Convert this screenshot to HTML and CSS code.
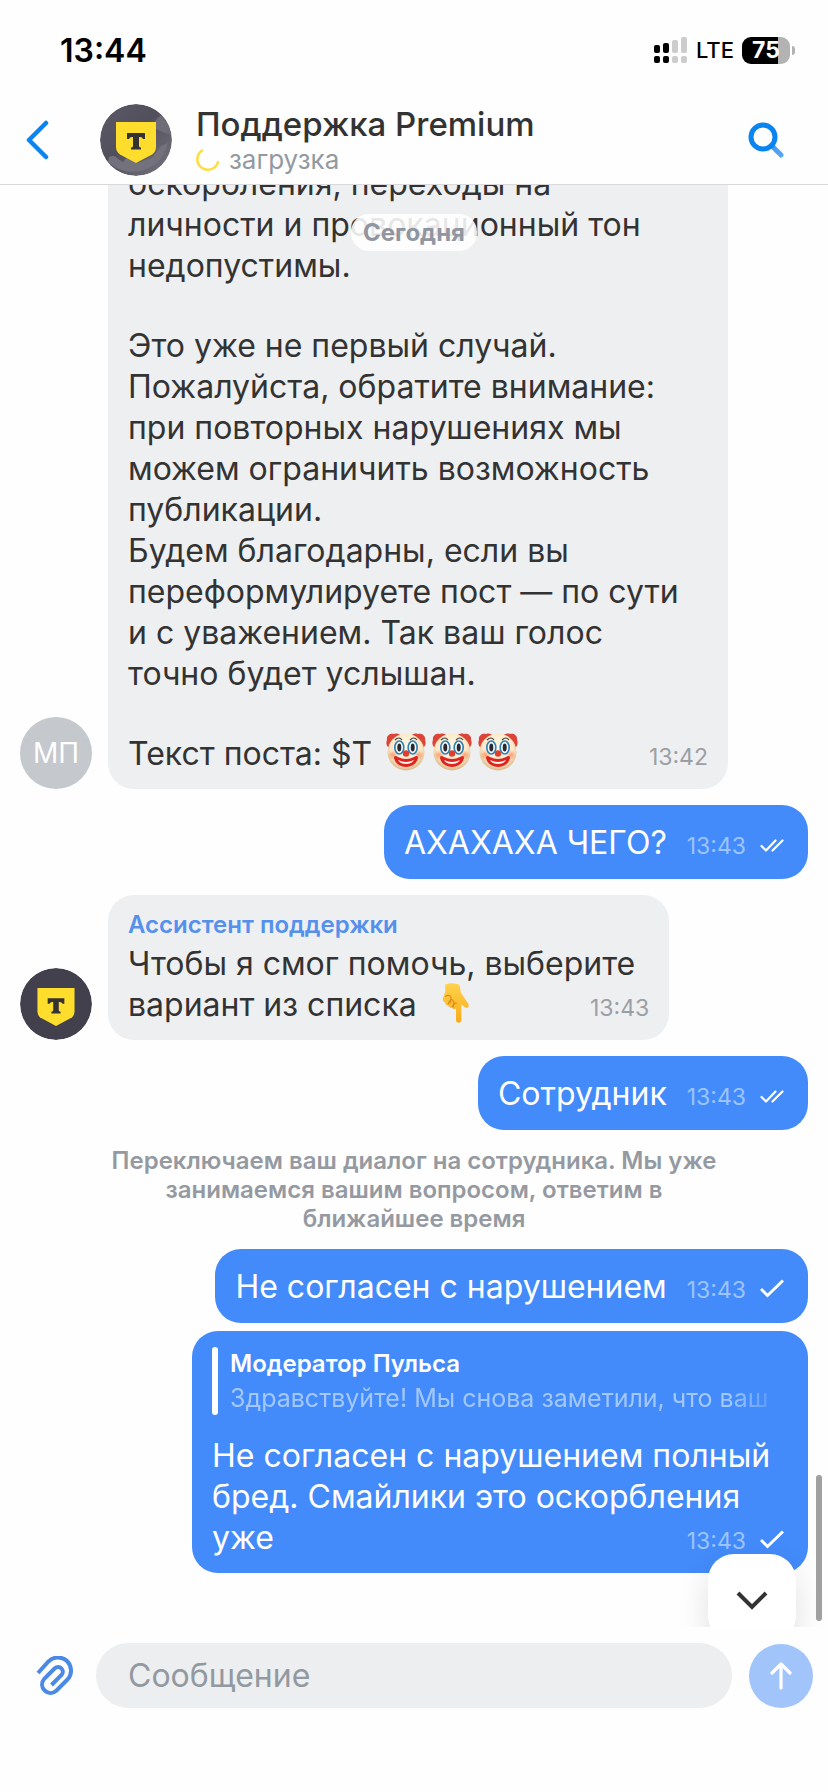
FILE: index.html
```html
<!DOCTYPE html>
<html lang="ru">
<head>
<meta charset="utf-8">
<meta name="viewport" content="width=device-width, initial-scale=1">
<title>Поддержка Premium</title>
<link rel="stylesheet" href="styles.css">
</head>
<body>
<svg class="defs" width="0" height="0" aria-hidden="true">
  <defs>
    <radialGradient id="face" cx="50%" cy="38%" r="62%">
      <stop offset="0" stop-color="#fffbe9"/><stop offset=".65" stop-color="#fbe9c8"/><stop offset="1" stop-color="#dcb98a"/>
    </radialGradient>
    <radialGradient id="cheek"><stop offset="0" stop-color="#ff8a5c" stop-opacity=".8"/><stop offset="1" stop-color="#ff8a5c" stop-opacity="0"/></radialGradient>
    <linearGradient id="hand" x1="0" y1="0" x2="0" y2="1"><stop offset="0" stop-color="#ffd24a"/><stop offset="1" stop-color="#f9ab1c"/></linearGradient>
    <linearGradient id="night" x1="0" y1="0" x2="1" y2="1"><stop offset="0" stop-color="#5c5a66"/><stop offset=".45" stop-color="#514f5b"/><stop offset="1" stop-color="#77757f"/></linearGradient>
    <linearGradient id="lens" gradientUnits="userSpaceOnUse" x1="23" y1="23" x2="34" y2="35"><stop offset="0" stop-color="#0a84ee"/><stop offset=".3" stop-color="#4a9ef2"/><stop offset="1" stop-color="#5aa6f3"/></linearGradient>
    <symbol id="clown" viewBox="0 0 40 38">
      <path d="M7 17C2 16-1 11 1 7 0 3 4 0 8 1c3-1 6 0 7 2zM33 17c5-1 8-6 6-10 1-4-3-7-7-6-3-1-6 0-7 2z" fill="#dc4438"/>
      <circle cx="20" cy="19" r="18.5" fill="url(#face)"/>
      <circle cx="7" cy="22" r="5" fill="url(#cheek)"/><circle cx="33" cy="22" r="5" fill="url(#cheek)"/>
      <path d="M9 7q4-4 7 0M24 7q4-4 7 0" fill="none" stroke="#4b4540" stroke-width="1.2"/>
      <ellipse cx="13.3" cy="14.5" rx="4.5" ry="6.5" fill="#fff" stroke="#3181b5" stroke-width="1.7"/>
      <ellipse cx="26.7" cy="14.5" rx="4.5" ry="6.5" fill="#fff" stroke="#3181b5" stroke-width="1.7"/>
      <ellipse cx="13.3" cy="14.5" rx="2" ry="4" fill="#282a30"/><ellipse cx="26.7" cy="14.5" rx="2" ry="4" fill="#282a30"/>
      <circle cx="20" cy="20.5" r="3.2" fill="#df3f2c"/>
      <path d="M8 24q1-2 4 0 8 4 16 0 3-2 4 0c0 5-5 10-12 10S8 29 8 24z" fill="#dd2420"/>
      <path d="M12 27q8 4 16 0-2 4-8 4t-8-4z" fill="#fff5ea"/>
    </symbol>
    <symbol id="down-hand" viewBox="0 0 28 42">
      <path d="M3 1.500Q9-.5 15 1q3 .3 3 3l1 6 7.500 11c1.500 3-.5 5.500-3 4L19.500 22v16a2.700 2.700 0 0 1-5.500 0V26q-3 2-4-1-3 1-4-2-3 0-3-3-3-1-2.500-4L3 9z" fill="url(#hand)"/>
      <path d="M3 14q4-3 6 1l-1 6M6 22q2-7 5-4 2 2-1 7M11 25q1-6 4-4" fill="none" stroke="#dc8d17" stroke-width="1.2"/>
    </symbol>
    <symbol id="shield" viewBox="0 0 40 41">
      <path d="M0 0h40v25q0 5-4 7.500L20 41 4 32.500Q0 30 0 25z" fill="#ffdd2d"/>
      <path d="M11 11h18v6h-2q-.5-2-3-2h-1v9q0 1.500 2 1.500V27.500H15v-2q2 0 2-1.500v-9h-1q-2.500 0-3 2h-2z" fill="#333"/>
    </symbol>
    <symbol id="read" viewBox="0 0 24 14"><path d="M1.500 7 6 11.500 15.500 1.500M12.500 11.500 22.500 1.500" fill="none" stroke="#fff" stroke-width="2.2" stroke-linecap="round" stroke-linejoin="round"/></symbol>
    <symbol id="sent" viewBox="0 0 24 19"><path d="M1 10l6.500 6.500L23 1.500" fill="none" stroke="#fff" stroke-width="3"/></symbol>
  </defs>
</svg>

<header class="top">
  <div class="status">
    <span class="clock">13:44</span>
    <div class="status-side">
      <svg width="34" height="27" viewBox="0 0 34 27" aria-hidden="true">
        <g fill="#000"><rect y="8" width="6" height="8" rx="2"/><rect y="19" width="6" height="7" rx="2"/><rect x="9" y="6" width="6" height="10" rx="2"/><rect x="9" y="19" width="6" height="7" rx="2"/></g>
        <g fill="#ccc"><rect x="18" y="3" width="6" height="13" rx="2"/><rect x="18" y="19" width="6" height="7" rx="2"/><rect x="27" width="6" height="16" rx="2"/><rect x="27" y="19" width="6" height="7" rx="2"/></g>
      </svg>
      <span class="network">LTE</span>
      <span class="battery">75</span>
    </div>
  </div>
  <div class="bar">
    <button class="icon-button back" aria-label="Назад"><svg width="24" height="40" viewBox="0 0 24 40"><path d="M20 3 3 20l17 17" fill="none" stroke="#0a84f0" stroke-width="4.500" stroke-linecap="round" stroke-linejoin="round"/></svg></button>
    <svg class="avatar" viewBox="0 0 72 72" aria-hidden="true">
      <circle cx="36" cy="36" r="36" fill="url(#night)"/>
      <path d="M9 53q6-3 9 2l5 3 5-6 10 7 15-6 8-11 7-3A36 36 0 0 1 8 58z" fill="#73717c"/>
      <path d="M61 11l-5 5-3 7 7 4 11 4a36 36 0 0 0-10-20z" fill="#6e6c77"/>
      <use href="#shield" x="16" y="18" width="40" height="41"/>
    </svg>
    <div class="who">
      <h1 class="title">Поддержка Premium</h1>
      <p class="state"><svg width="24" height="24" viewBox="0 0 24 24" aria-hidden="true"><path d="M6 2.500A10.500 10.500 0 1 0 22 14" fill="none" stroke="#ffdc40" stroke-width="2.600" stroke-linecap="round"/></svg>загрузка</p>
    </div>
    <button class="icon-button" aria-label="Поиск"><svg width="36" height="36" viewBox="0 0 36 36"><path d="M23.500 23.500 33 33" stroke="url(#lens)" stroke-width="5" stroke-linecap="round"/><circle cx="15" cy="15" r="12" fill="none" stroke="#0a84ee" stroke-width="5"/></svg></button>
  </div>
</header>

<main class="chat">
  <div class="row">
    <span class="avatar initials">МП</span>
    <article class="bubble wide">
      <p>оскорбления, переходы на<br>личности и провокационный тон<br>недопустимы.</p>
      <p class="spaced">Это уже не первый случай.<br>Пожалуйста, обратите внимание:<br>при повторных нарушениях мы<br>можем ограничить возможность<br>публикации.<br>Будем благодарны, если вы<br>переформулируете пост — по сути<br>и с уважением. Так ваш голос<br>точно будет услышан.</p>
      <div class="last spaced"><p>Текст поста: $T <span class="emoji-set" role="img" aria-label="🤡🤡🤡"><svg class="clown"><use href="#clown"/></svg><svg class="clown"><use href="#clown"/></svg><svg class="clown"><use href="#clown"/></svg></span></p><time>13:42</time></div>
    </article>
  </div>

  <div class="row own">
    <article class="bubble last"><p>АХАХАХА ЧЕГО?</p><time>13:43</time><svg class="tick double" role="img" aria-label="Прочитано"><use href="#read"/></svg></article>
  </div>

  <div class="row">
    <svg class="avatar" viewBox="0 0 72 72" aria-hidden="true"><circle cx="36" cy="36" r="36" fill="#42404d"/><use href="#shield" x="17" y="20" width="38" height="38"/></svg>
    <article class="bubble">
      <h2 class="author">Ассистент поддержки</h2>
      <p class="lead">Чтобы я смог помочь, выберите</p>
      <div class="last"><p>вариант из списка <svg class="hand" role="img" aria-label="👇"><use href="#down-hand"/></svg></p><time>13:43</time></div>
    </article>
  </div>

  <div class="row own">
    <article class="bubble last"><p>Сотрудник</p><time>13:43</time><svg class="tick double" role="img" aria-label="Прочитано"><use href="#read"/></svg></article>
  </div>

  <p class="notice">Переключаем ваш диалог на сотрудника. Мы уже<br>занимаемся вашим вопросом, ответим в<br>ближайшее время</p>

  <div class="row own">
    <article class="bubble last"><p>Не согласен с нарушением</p><time>13:43</time><svg class="tick" role="img" aria-label="Отправлено"><use href="#sent"/></svg></article>
  </div>

  <div class="row own follow">
    <article class="bubble wide">
      <blockquote class="quote"><strong>Модератор Пульса</strong><p>Здравствуйте! Мы снова заметили, что ваш</p></blockquote>
      <p>Не согласен с нарушением полный<br>бред. Смайлики это оскорбления</p>
      <div class="last"><p>уже</p><time>13:43</time><svg class="tick" role="img" aria-label="Отправлено"><use href="#sent"/></svg></div>
    </article>
  </div>

  <div class="date">Сегодня</div>
  <button class="to-end" aria-label="Вниз"><svg width="32" height="20" viewBox="0 0 32 20"><path d="M2 2l14 14L30 2" fill="none" stroke="#333" stroke-width="4"/></svg></button>
  <span class="scrollbar"></span>
</main>

<form class="composer">
  <button type="button" class="icon-button clip" aria-label="Прикрепить файл"><svg width="40" height="40" viewBox="0 0 40 40"><path d="M2 17 12.500 5.500C18 0 26 .5 31 5c5 5 5.500 13 .5 18.500L20.500 34.500C12.500 42 1 31 8.500 22.500L18.500 12.500c5-4.500 11 2 7 6.500L15.500 29" fill="none" stroke="#4a8ae6" stroke-width="4"/></svg></button>
  <input class="field" type="text" placeholder="Сообщение" aria-label="Сообщение">
  <button type="button" class="send" aria-label="Отправить"><svg width="24" height="30" viewBox="0 0 24 30"><path d="M12 27V4M3 12l9-9 9 9" fill="none" stroke="#fff" stroke-width="3.200" stroke-linecap="round" stroke-linejoin="round"/></svg></button>
</form>
</body>
</html>
```
FILE: styles.css
```css
* { box-sizing: border-box; margin: 0; padding: 0; }
html, body { height: 100%; }
body {
  display: flex;
  flex-direction: column;
  background: #fefefe;
  color: #333;
  font: 400 32px/41px Inter, "Noto Sans", sans-serif;
}
button { border: 0; background: none; cursor: pointer; }
svg { display: block; }
.defs { position: absolute; }

.top { flex: none; border-bottom: 1px solid #d9d9db; }
.status {
  display: flex;
  align-items: center;
  justify-content: space-between;
  height: 96px;
  padding: 4px 34px 0 60px;
  color: #000;
}
.clock { font-size: 32px; font-weight: 600; }
.status-side { display: flex; align-items: center; gap: 8px; }
.network { font-size: 22px; font-weight: 500; line-height: 28px; }
.battery {
  position: relative;
  width: 48px;
  height: 27px;
  margin-right: 4px;
  border-radius: 9px;
  background: linear-gradient(90deg, #000 75%, #b3b3b3 75%);
  color: #fff;
  font-size: 23px;
  font-weight: 700;
  line-height: 27px;
  text-align: center;
}
.battery::after {
  content: "";
  position: absolute;
  left: 50px;
  top: 9px;
  width: 3px;
  height: 9px;
  border-radius: 0 4px 4px 0;
  background: #b3b3b3;
}
.bar { display: flex; align-items: center; height: 88px; padding: 0 44px 0 26px; }
.icon-button { flex: none; display: flex; }
.back { width: 74px; }
.avatar { flex: none; width: 72px; height: 72px; border-radius: 50%; }
.who { flex: 1; padding-left: 24px; }
.title { font-size: 33px; font-weight: 500; line-height: 40px; }
.state {
  display: flex;
  align-items: center;
  gap: 9px;
  color: #9299a2;
  font-size: 26px;
  line-height: 32px;
}

.chat {
  position: relative;
  flex: 1;
  min-height: 0;
  display: flex;
  flex-direction: column;
  justify-content: flex-end;
  gap: 16px;
  overflow: hidden;
  padding: 0 20px 54px;
}
.date {
  position: absolute;
  top: 29px;
  left: 50%;
  transform: translateX(-50%);
  padding: 0 12px;
  border-radius: 18px;
  background: rgba(255, 255, 255, .88);
  color: #9095a0;
  font-size: 24px;
  font-weight: 700;
  line-height: 37px;
}
.row { flex: none; display: flex; align-items: flex-end; gap: 16px; }
.own { justify-content: flex-end; }
.follow { margin-top: -8px; }
.bubble {
  max-width: 620px;
  padding: 16px 20px 15px;
  border-radius: 26px;
  background: #eeeff1;
}
.own .bubble { padding-right: 24px; background: #438bfa; color: #fff; }
.own .bubble.last { min-height: 74px; padding-top: 17px; }
.wide { flex: 0 1 620px; min-width: 0; }
.own .wide { flex-basis: 616px; }
.spaced { margin-top: 39px; }
.lead { margin-right: 14px; }
.last { display: flex; align-items: baseline; }
.last time { margin-left: auto; padding-left: 20px; }
time { color: #9b9fa5; font-size: 23px; line-height: 24px; }
.own time { color: #9cc4ff; }
.tick { flex: none; width: 24px; height: 19px; margin-left: 14px; }
.double { height: 16px; }
.initials {
  background: #c5c8cd;
  color: #fff;
  font-size: 28px;
  line-height: 72px;
  text-align: center;
}
.emoji-set { display: inline-flex; gap: 6px; margin: -8px 0 0 5px; vertical-align: -6px; }
.clown { width: 40px; height: 38px; }
.hand { display: inline-block; width: 28px; height: 41px; margin: -12px 0 0 16px; vertical-align: -8px; }
.author { margin-bottom: 4px; color: #5490ec; font-size: 24px; font-weight: 600; line-height: 28px; }
.notice { color: #9599a1; font-size: 24px; font-weight: 600; line-height: 29px; text-align: center; }
.quote {
  position: relative;
  overflow: hidden;
  margin-bottom: 20px;
  padding-left: 18px;
  font-size: 24px;
  line-height: 34px;
  white-space: nowrap;
}
.quote::before {
  content: "";
  position: absolute;
  inset: 0 auto 0 0;
  width: 6px;
  border-radius: 3px;
  background: #fff;
}
.quote strong { display: block; font-weight: 600; }
.quote p {
  color: #a3c8ff;
  font-size: 25px;
  -webkit-mask-image: linear-gradient(90deg, #000 90%, transparent);
  mask-image: linear-gradient(90deg, #000 90%, transparent);
}
.to-end {
  position: absolute;
  right: 32px;
  bottom: -15px;
  width: 88px;
  height: 88px;
  display: flex;
  justify-content: center;
  padding-top: 37px;
  border-radius: 26px;
  background: #fff;
  box-shadow: 0 14px 32px rgba(0, 0, 0, .12);
}
.scrollbar {
  position: absolute;
  right: 6px;
  bottom: 6px;
  width: 6px;
  height: 146px;
  border-radius: 3px;
  background: #a0a0a0;
}

.composer { flex: none; display: flex; align-items: center; padding: 16px 15px 84px 36px; }
.clip { width: 60px; }
.field {
  flex: 1;
  min-width: 0;
  height: 65px;
  margin-right: 17px;
  padding: 0 32px;
  border: 0;
  border-radius: 33px;
  background: #eceef0;
  color: #333;
  font: inherit;
}
.field::placeholder { color: #9299a0; opacity: 1; }
.send {
  flex: none;
  display: flex;
  align-items: center;
  justify-content: center;
  width: 64px;
  height: 64px;
  border-radius: 50%;
  background: #a1c4fb;
}
```
